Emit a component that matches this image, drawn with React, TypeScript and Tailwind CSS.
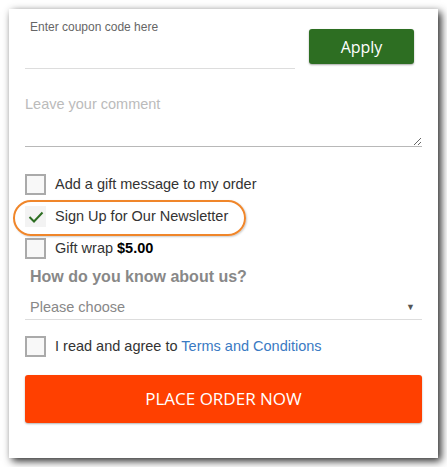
import React from "react";

function Box() {
  return <div className="w-[21px] h-[21px] border-2 border-[#aaaaaa] bg-[#f8f8f8] shrink-0 box-border" />;
}

export default function App() {
  return (
    <div className="w-[447px] h-[467px] bg-white pt-[9px] pl-[9px]" style={{ fontFamily: '"Liberation Sans", Arial, sans-serif' }}>
      <div className="w-[429px] h-[449px] bg-white shadow-[3px_3px_8px_rgba(0,0,0,0.85)] px-4 pt-[10px] box-border">
        {/* coupon row */}
        <div className="flex items-start">
          <div className="w-[270px]">
            <div className="pl-[5px] pt-[1px] text-[12px] leading-[14px] text-[#666]">Enter coupon code here</div>
            <div className="h-[35px] border-b border-[#dddddd] box-border" />
          </div>
          <button
            className="ml-[14px] mt-[10px] w-[105px] h-[35px] bg-[#2d6e22] rounded-[3px] text-white text-[16px] shadow-[0_1px_2px_rgba(0,0,0,0.35)]"
            style={{ fontFamily: '"Open Sans", sans-serif' }}
          >
            Apply
          </button>
        </div>

        {/* comment */}
        <textarea
          placeholder="Leave your comment"
          className="block mt-[11px] w-full h-[67px] pt-[14px] px-0 border-0 border-b border-[#b8b8b8] text-[14.5px] leading-[20px] placeholder:text-[#bbbbbb] outline-none box-border"
          style={{ fontFamily: '"Liberation Sans", Arial, sans-serif' }}
        />

        {/* gift message */}
        <div className="mt-[27px] h-[21px] flex items-center gap-[9px] text-[14.5px] leading-[18px] text-[#333]">
          <Box />
          <span className="-mt-[2px]">Add a gift message to my order</span>
        </div>

        {/* newsletter */}
        <div className="relative h-[43px] flex items-center gap-[9px] text-[14.5px] text-[#333]">
          <div className="absolute left-[-12px] top-[5px] w-[233px] h-[36px] rounded-full border-2 border-[#f0862a] shadow-[1px_1px_2px_rgba(0,0,0,0.2)]" />
          <div className="w-[21px] h-[21px] bg-[#f3f3f3] shrink-0 flex items-center justify-center">
            <svg width="16" height="12" viewBox="0 0 16 12">
              <polyline points="1.5,6 6,10.5 14.5,1.5" fill="none" stroke="#2d6e22" strokeWidth="2" />
            </svg>
          </div>
          <span className="relative">Sign Up for Our Newsletter</span>
        </div>

        {/* gift wrap */}
        <div className="h-[21px] flex items-center gap-[9px] text-[14.5px] text-[#333]">
          <Box />
          <span>
            Gift wrap <b className="text-black">$5.00</b>
          </span>
        </div>

        {/* heading */}
        <div className="mt-[8px] pl-[5px] text-[16px] leading-[20px] font-bold text-[#888888]">How do you know about us?</div>

        {/* select */}
        <div className="mt-[8px] h-[25px] border-b border-[#dddddd] box-border flex items-center justify-between pl-[5px] pr-[7px] text-[14.5px] leading-[24px] text-[#888888]">
          <span>Please choose</span>
          <span className="text-[9px] text-[#555]">▼</span>
        </div>

        {/* terms */}
        <div className="mt-[16px] h-[21px] flex items-center gap-[9px] text-[14.5px] text-[#333]">
          <Box />
          <span>
            I read and agree to <span className="text-[#3a7ac3]">Terms and Conditions</span>
          </span>
        </div>

        <button
          className="mt-[18px] w-full h-[48px] bg-[#ff4000] rounded-[3px] text-white text-[17px] shadow-[0_1px_2px_rgba(0,0,0,0.3)]"
          style={{ fontFamily: '"Open Sans", sans-serif' }}
        >
          PLACE ORDER NOW
        </button>
      </div>
    </div>
  );
}
